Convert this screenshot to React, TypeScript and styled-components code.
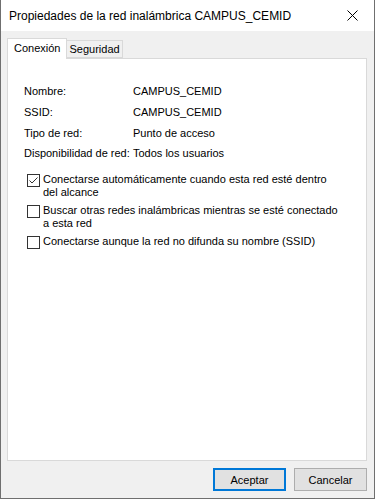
import React from 'react'
import styled, { createGlobalStyle } from 'styled-components'

const GlobalStyle = createGlobalStyle`
  html, body {
    margin: 0;
    padding: 0;
    background: #ffffff;
  }
  * {
    box-sizing: border-box;
  }
`

const Window = styled.div`
  width: 375px;
  height: 499px;
  display: flex;
  flex-direction: column;
  border: 1px solid #6f6f6f;
  border-top: none;
  font-family: 'Liberation Sans', Arial, sans-serif;
  font-size: 11px;
  color: #000;
  overflow: hidden;
  white-space: nowrap;
`

const TitleBar = styled.div`
  height: 31px;
  display: flex;
  align-items: center;
  justify-content: space-between;
  padding: 0 8px 0 8px;
  background: #ffffff;
  font-size: 12px;
`

const CloseButton = styled.div`
  width: 24px;
  height: 24px;
  display: flex;
  align-items: center;
  justify-content: center;
  margin-right: 2px;
`

const Body = styled.div`
  flex: 1;
  display: flex;
  flex-direction: column;
  background: #f0f0f0;
  padding: 7px 7px 7px 6px;
`

const TabStrip = styled.div`
  display: flex;
  align-items: flex-end;
  height: 20px;
  position: relative;
  z-index: 1;
`

const Tab = styled.div<{ $active?: boolean }>`
  display: flex;
  align-items: center;
  justify-content: center;
  height: ${({ $active }) => ($active ? '21px' : '18px')};
  padding: 0 ${({ $active }) => ($active ? '6px' : '2px')};
  margin-bottom: ${({ $active }) => ($active ? '-1px' : '0')};
  margin-left: ${({ $active }) => ($active ? '0' : '-1px')};
  background: ${({ $active }) => ($active ? '#ffffff' : '#f0f0f0')};
  border: 1px solid #d9d9d9;
  border-bottom: ${({ $active }) => ($active ? 'none' : '1px solid #d9d9d9')};
  padding-bottom: ${({ $active }) => ($active ? '2px' : '0')};
`

const Panel = styled.div`
  flex: 1;
  background: #ffffff;
  border: 1px solid #d9d9d9;
  padding: 22px 16px 0 16px;
`

const InfoGrid = styled.div`
  display: grid;
  grid-template-columns: 109px 1fr;
  grid-auto-rows: 20.67px;
  align-items: center;
`

const Options = styled.div`
  display: flex;
  flex-direction: column;
  gap: 6px;
  margin-top: 10px;
  padding-left: 3px;
`

const Option = styled.label`
  display: flex;
  align-items: flex-start;
  gap: 3px;
  line-height: 13px;
  width: 314px;
  white-space: normal;
`

const Box = styled.span`
  flex: none;
  width: 13px;
  height: 13px;
  border: 1px solid #333333;
  background: #ffffff;
  display: flex;
  align-items: center;
  justify-content: center;
`

const OptionText = styled.span`
  margin-top: -1px;
`

const ButtonRow = styled.div`
  display: flex;
  justify-content: flex-end;
  gap: 8px;
  margin-top: 7px;
`

const Button = styled.div<{ $default?: boolean }>`
  width: 73px;
  height: 23px;
  display: flex;
  align-items: center;
  justify-content: center;
  background: #e1e1e1;
  border: ${({ $default }) => ($default ? '2px solid #0078d7' : '1px solid #adadad')};
`

const Checkbox = ({ checked }: { checked?: boolean }) => (
  <Box>
    {checked && (
      <svg width="11" height="11" viewBox="0 0 11 11">
        <path d="M1.5 5.5 L4 8 L9.5 2.5" fill="none" stroke="#333" strokeWidth="1" />
      </svg>
    )}
  </Box>
)

const info = [
  ['Nombre:', 'CAMPUS_CEMID'],
  ['SSID:', 'CAMPUS_CEMID'],
  ['Tipo de red:', 'Punto de acceso'],
  ['Disponibilidad de red:', 'Todos los usuarios'],
]

const options = [
  { text: 'Conectarse automáticamente cuando esta red esté dentro del alcance', checked: true },
  { text: 'Buscar otras redes inalámbricas mientras se esté conectado a esta red', checked: false },
  { text: 'Conectarse aunque la red no difunda su nombre (SSID)', checked: false },
]

export default function App() {
  return (
    <Window>
      <GlobalStyle />
      <TitleBar>
        <span>Propiedades de la red inalámbrica CAMPUS_CEMID</span>
        <CloseButton>
          <svg width="11" height="11" viewBox="0 0 11 11">
            <path d="M0.5 0.5 L10.5 10.5 M10.5 0.5 L0.5 10.5" stroke="#000" strokeWidth="1" />
          </svg>
        </CloseButton>
      </TitleBar>
      <Body>
        <TabStrip>
          <Tab $active>Conexión</Tab>
          <Tab>Seguridad</Tab>
        </TabStrip>
        <Panel>
          <InfoGrid>
            {info.map(([label, value]) => (
              <React.Fragment key={label}>
                <span>{label}</span>
                <span>{value}</span>
              </React.Fragment>
            ))}
          </InfoGrid>
          <Options>
            {options.map((o) => (
              <Option key={o.text}>
                <Checkbox checked={o.checked} />
                <OptionText>{o.text}</OptionText>
              </Option>
            ))}
          </Options>
        </Panel>
        <ButtonRow>
          <Button $default>Aceptar</Button>
          <Button>Cancelar</Button>
        </ButtonRow>
      </Body>
    </Window>
  )
}
